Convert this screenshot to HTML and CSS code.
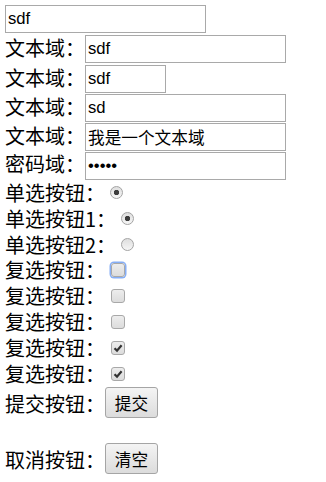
FILE: index.html
```html
<!DOCTYPE html>
<html lang="zh">
<head>
<meta charset="utf-8">
<title>表单</title>
<link rel="stylesheet" href="styles.css">
</head>
<body>
<form class="form">
  <div class="row h30"><input class="text w-long" type="text" value="sdf"></div>
  <div class="row h30"><span class="label up">文本域：</span><input class="text w-long" type="text" value="sdf"></div>
  <div class="row h30"><span class="label up">文本域：</span><input class="text w-short" type="text" value="sdf"></div>
  <div class="row h28"><span class="label up">文本域：</span><input class="text w-long" type="text" value="sd"></div>
  <div class="row h30"><span class="label up">文本域：</span><input class="text w-long" type="text" value="我是一个文本域"></div>
  <div class="row h27"><span class="label up">密码域：</span><input class="text w-long" type="password" value="12345"></div>
  <div class="row h26"><span class="label down">单选按钮：</span><input class="radio" type="radio" name="r0" checked></div>
  <div class="row h26"><span class="label down">单选按钮1：</span><input class="radio" type="radio" name="r1" checked></div>
  <div class="row h26"><span class="label down">单选按钮2：</span><input class="radio" type="radio" name="r2"></div>
  <div class="row h26"><span class="label">复选按钮：</span><span class="box focus"></span></div>
  <div class="row h26"><span class="label">复选按钮：</span><span class="box"></span></div>
  <div class="row h26"><span class="label">复选按钮：</span><span class="box"></span></div>
  <div class="row h26"><span class="label">复选按钮：</span><span class="box"><svg class="tick" viewBox="0 0 14 14" width="14" height="14"><path d="M3.5 7.2 L6 9.6 L10.6 4.2" fill="none" stroke="#333" stroke-width="2.2"/></svg></span></div>
  <div class="row h26"><span class="label">复选按钮：</span><span class="box"><svg class="tick" viewBox="0 0 14 14" width="14" height="14"><path d="M3.5 7.2 L6 9.6 L10.6 4.2" fill="none" stroke="#333" stroke-width="2.2"/></svg></span></div>
  <div class="row h31"><span class="label down">提交按钮：</span><button class="btn" type="submit">提交</button></div>
  <div class="spacer"></div>
  <div class="row h31"><span class="label down">取消按钮：</span><button class="btn" type="reset">清空</button></div>
</form>
</body>
</html>
```
FILE: styles.css
```css
html, body {
  margin: 0;
  padding: 0;
  background: #ffffff;
}
.form {
  padding: 4px 0 0 5px;
  color: #000;
}
.row {
  display: flex;
  align-items: center;
}
.h26 { height: 26px; }
.h27 { height: 27px; }
.h28 { height: 28px; }
.h30 { height: 30px; }
.h31 { height: 31px; }
.spacer { height: 25px; }
.label {
  font-family: "Noto Sans CJK SC", "Liberation Sans", sans-serif;
  font-size: 20px;
  line-height: 24px;
  white-space: nowrap;
}
.label.up { margin-top: -3px; }
.label.down { margin-top: 2px; }
.text {
  box-sizing: border-box;
  height: 28px;
  margin: 0;
  padding: 0 2px;
  border: 1px solid #a9a9a9;
  border-radius: 0;
  font-family: "Liberation Sans", "Noto Sans CJK SC", sans-serif;
  font-size: 16.67px;
  color: #000;
  background: #fff;
  outline: none;
}
.w-long { width: 201px; }
.w-short { width: 81px; }
.radio {
  -webkit-appearance: none;
  appearance: none;
  box-sizing: border-box;
  width: 13px;
  height: 13px;
  margin: 0 0 0 5px;
  border: 1px solid #a4a4a4;
  border-radius: 50%;
  background: linear-gradient(#dedede, #f6f6f6);
}
.radio:checked {
  background: radial-gradient(circle, #3d3d3d 0, #3d3d3d 2.4px, transparent 3px), linear-gradient(#dedede, #f6f6f6);
}
.box {
  position: relative;
  box-sizing: border-box;
  width: 14px;
  height: 14px;
  margin-left: 6px;
  border: 1px solid #a8a8a8;
  border-radius: 3px;
  background: linear-gradient(#ededed, #dcdcdc);
}
.box.focus {
  box-shadow: 0 0 0 1.5px #86aef5;
}
.tick {
  position: absolute;
  left: -1px;
  top: -1px;
}
.btn {
  box-sizing: border-box;
  width: 53px;
  height: 31px;
  margin: 0;
  padding: 0;
  border: 1px solid #a5a5a5;
  border-radius: 3px;
  background: linear-gradient(#f4f4f4, #dcdcdc);
  font-family: "Noto Sans CJK SC", sans-serif;
  font-size: 16.67px;
  color: #000;
}
```
